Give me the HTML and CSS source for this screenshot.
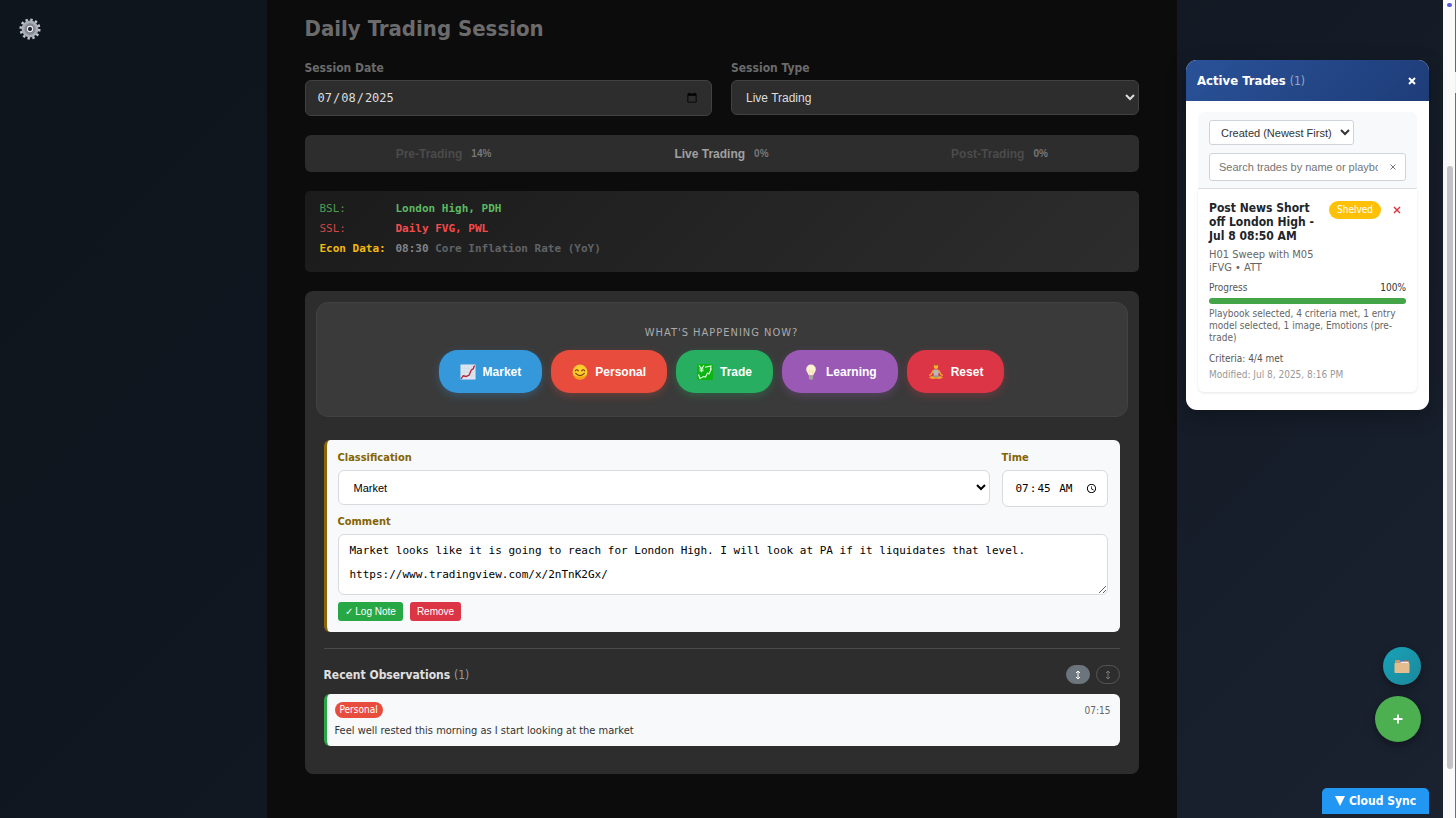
FILE: index.html
```html
<!DOCTYPE html>
<html lang="en">
<head>
<meta charset="utf-8">
<title>Daily Trading Session</title>
<link rel="stylesheet" href="styles.css">
</head>
<body>
<div class="app">
  <button class="settings" aria-label="Settings">
    <svg viewBox="0 0 24 24" width="22" height="22">
      <g fill="none" stroke="#a9adb5">
        <circle cx="12" cy="12" r="10" stroke-width="3" stroke-dasharray="2.6 2.636" stroke="#c3c6cd"/>
        <circle cx="12" cy="12" r="7.4" stroke-width="3.6"/>
        <circle cx="12" cy="12" r="5" stroke-width="2.4" stroke="#868a93"/>
        <circle cx="12" cy="12" r="2.9" stroke-width="1.6" stroke="#e6e8ec"/>
      </g>
      <circle cx="12" cy="12" r="1.9" fill="#23272f"/>
    </svg>
  </button>

  <main class="session">
    <h1 class="title">Daily Trading Session</h1>
    <div class="session-fields">
      <div class="field">
        <label for="date">Session Date</label>
        <input class="dark-control date" id="date" type="date" value="2025-07-08">
      </div>
      <div class="field">
        <label for="type">Session Type</label>
        <select class="dark-control type" id="type"><option>Live Trading</option></select>
      </div>
    </div>

    <nav class="tabs">
      <button class="tab">Pre-Trading <span class="pct">14%</span></button>
      <button class="tab active">Live Trading <span class="pct">0%</span></button>
      <button class="tab">Post-Trading <span class="pct">0%</span></button>
    </nav>

    <dl class="levels">
      <dt class="buy">BSL:</dt><dd class="buy">London High, PDH</dd>
      <dt class="sell">SSL:</dt><dd class="sell">Daily FVG, PWL</dd>
      <dt class="econ">Econ Data:</dt><dd><span class="clock">08:30</span> Core Inflation Rate (YoY)</dd>
    </dl>

    <section class="live">
      <div class="actions">
        <p class="prompt">What's happening now?</p>
        <div class="action-row">
          <button class="action market">
            <svg viewBox="0 0 16 16" width="16" height="16"><rect x=".5" y=".5" width="15" height="15" fill="#dfe6f1"/><path d="M.5 4.3h15M.5 8h15M.5 11.700h15M4.300.5v15M8 .5v15M11.700.5v15" stroke="#cbd6e6" stroke-width=".6"/><path d="M1 15l2.200-3.200 3 .7 3-1.400 2-5 2-1.300L14.500 1.500" fill="none" stroke="#b3242f" stroke-width="1.300"/></svg>Market</button>
          <button class="action personal">
            <svg viewBox="0 0 16 16" width="16" height="16"><circle cx="8" cy="8" r="7.400" fill="#ffcb2f"/><path d="M1 10.500a7.400 7.400 0 0 0 14 0Q8 15 1 10.500" fill="#f5a21b"/><path d="M3.300 6.900q1.500-2.400 3 0M9.700 6.900q1.500-2.400 3 0M3.700 9.300q4.300 4.600 8.600 0" fill="none" stroke="#74400d" stroke-width="1.100" stroke-linecap="round"/></svg>Personal</button>
          <button class="action trade">
            <svg viewBox="0 0 16 16" width="16" height="16"><rect width="16" height="16" rx="1.500" fill="#0cb512"/><path d="M2 1.500l2.500 3.200L7 1.500M4.500 4.700v3.600M2.500 5h4M2.500 6.800h4M1.500 10.500l1.500 4 3.500-2 2 .5 2-4 1.500 1 2.500-5.500M8 3.200l6-1.200-.6 4" fill="none" stroke="#eaffea" stroke-width="1.100"/></svg>Trade</button>
          <button class="action learning">
            <svg viewBox="0 0 16 16" width="16" height="16"><path d="M8 .5a4.800 4.800 0 0 0-4.800 4.900c0 2.200 1.800 3.400 2.600 6h4.400c.8-2.600 2.600-3.800 2.600-6A4.800 4.800 0 0 0 8 .5z" fill="#fff3cf"/><path d="M6.800 11l-.8-4.500 2 1 2-1-.8 4.500" fill="none" stroke="#f0d79c" stroke-width=".7"/><path d="M5.900 11.400h4.200v2.800L9 15.700H7l-1.100-1.500z" fill="#a7a49b"/></svg>Learning</button>
          <button class="action reset">
            <svg viewBox="0 0 16 16" width="16" height="16"><circle cx="8" cy="2.800" r="2.200" fill="#f4b42c"/><circle cx="8" cy=".9" r=".9" fill="#8a5a22"/><path d="M6 5.500h4l1.200 3.500-1 .5.200 2.500H5.600l.2-2.500-1-.5z" fill="#b5b8bb"/><path d="M5.500 6L3 10.500l-1.800 1M10.500 6L13 10.500l1.800 1" fill="none" stroke="#f4b42c" stroke-width="1.300"/><path d="M1 13.500q3-2.500 7-.7 4-1.800 7 .7-2 2.200-7 1-5 1.200-7-1z" fill="#e9a52c"/><path d="M4 12.600l4 .6 4-.6-4-1.400z" fill="#8d9599"/></svg>Reset</button>
        </div>
      </div>

      <div class="live-body">
        <form class="note" onsubmit="return false">
          <div class="note-row">
            <div class="field wide">
              <label for="class">Classification</label>
              <select class="class-select" id="class"><option>Market</option></select>
            </div>
            <div class="field">
              <label for="time">Time</label>
              <input class="time" id="time" type="time" value="07:45">
            </div>
          </div>
          <div class="field comment-field">
            <label for="comment">Comment</label>
            <textarea id="comment" spellcheck="false">Market looks like it is going to reach for London High. I will look at PA if it liquidates that level.

https://www.tradingview.com/x/2nTnK2Gx/</textarea>
          </div>
          <div class="note-buttons">
            <button class="log">✓ Log Note</button>
            <button class="remove">Remove</button>
          </div>
        </form>

        <div class="recent">
          <div class="recent-head">
            <h2>Recent Observations <span class="count">(1)</span></h2>
            <div class="sorts">
              <button class="sort on" aria-label="Expand"><svg viewBox="0 0 6 10" width="6" height="10"><path d="M3 1v8M1 3l2-2 2 2M1 7l2 2 2-2" fill="none" stroke="currentColor"/></svg></button>
              <button class="sort" aria-label="Collapse"><svg viewBox="0 0 6 10" width="6" height="10"><path d="M3 1v8M1 3l2-2 2 2M1 7l2 2 2-2" fill="none" stroke="currentColor"/></svg></button>
            </div>
          </div>
          <article class="observation">
            <div class="obs-top"><span class="badge">Personal</span><time>07:15</time></div>
            <p>Feel well rested this morning as I start looking at the market</p>
          </article>
        </div>
      </div>
    </section>
  </main>

  <aside class="trades">
    <header class="trades-head">
      <h2>Active Trades <span class="count">(1)</span></h2>
      <button class="close" aria-label="Close"><svg viewBox="0 0 8 8" width="8" height="8"><path d="M1 1l6 6M7 1L1 7" stroke="currentColor" stroke-width="2"/></svg></button>
    </header>
    <div class="trades-body">
      <div class="filters">
        <select class="order" aria-label="Sort order"><option>Created (Newest First)</option></select>
        <div class="search">
          <input type="text" aria-label="Search trades" placeholder="Search trades by name or playbook">
          <button class="clear" aria-label="Clear search"><svg viewBox="0 0 6 6" width="6" height="6"><path d="M.5.5l5 5M5.500.5l-5 5" stroke="currentColor"/></svg></button>
        </div>
      </div>
      <article class="trade-card">
        <div class="trade-top">
          <div class="trade-name">
            <h3>Post News Short off London High - Jul 8 08:50 AM</h3>
            <p class="playbook">H01 Sweep with M05 iFVG • ATT</p>
          </div>
          <span class="shelved">Shelved</span>
          <button class="delete" aria-label="Delete trade"><svg viewBox="0 0 8 8" width="8" height="8"><path d="M1 1l6 6M7 1L1 7" stroke="currentColor" stroke-width="1.500"/></svg></button>
        </div>
        <div class="progress-row"><span>Progress</span><span class="progress-value">100%</span></div>
        <div class="bar"><div class="fill" style="width:100%"></div></div>
        <p class="summary">Playbook selected, 4 criteria met, 1 entry model selected, 1 image, Emotions (pre-trade)</p>
        <p class="criteria">Criteria: 4/4 met</p>
        <p class="modified">Modified: Jul 8, 2025, 8:16 PM</p>
      </article>
    </div>
  </aside>

  <div class="floating">
    <button class="fab files" aria-label="Files">
      <svg viewBox="0 0 16 16" width="16" height="16"><path d="M1 3q0-1 1-1h4l1 1.500h8v4H1z" fill="#c89b68"/><path d="M6 2.500h3v2H6z" fill="#5b6bc0"/><path d="M9.500 2.500h5v1.200h-5z" fill="#d9534f"/><path d="M6.500 3.700h8v2h-8z" fill="#f1f1f4"/><rect x=".5" y="5" width="15" height="10" rx=".8" fill="#e3bd8d"/></svg>
    </button>
    <button class="fab add" aria-label="Add"><svg viewBox="0 0 10 10" width="10" height="10"><path d="M5 .5v9M.5 5h9" stroke="currentColor" stroke-width="1.800"/></svg></button>
  </div>
  <button class="sync"><svg viewBox="0 0 10 10" width="10" height="10"><path d="M0 0h10L5 10z" fill="currentColor"/></svg>Cloud Sync</button>
</div>
<div class="scroll-track"><span class="marker"></span><span class="thumb"></span></div>
<div class="edge"></div>
</body>
</html>
```
FILE: styles.css
```css
* { box-sizing: border-box; }
body {
  margin: 0;
  display: flex;
  min-height: 100vh;
  background: #fafafa;
  font-family: "DejaVu Sans Condensed", "Noto Sans", sans-serif;
  font-size: 11px;
  color: #333;
}
h1, h2, h3, p, dl, dd { margin: 0; }
button, select, input, textarea { font-family: "Liberation Sans", Arial, sans-serif; }
button { border: 0; padding: 0; background: none; display: flex; align-items: center; justify-content: center; }

.app {
  position: relative;
  flex: 1;
  min-height: 100vh;
  background: linear-gradient(135deg, #0e151d 0%, #0f161f 35%, #1a2230 100%);
}
.settings { position: absolute; left: 19px; top: 18px; }

.session {
  max-width: 910px;
  min-height: 100vh;
  margin: 0 auto;
  padding: 13px 38px 44px;
  background: #0c0c0c;
}
.title { font-size: 22px; line-height: 32px; color: #6b6b6b; }
.session-fields { display: grid; grid-template-columns: 1fr 1fr; gap: 19px; margin-top: 15px; align-items: start; }
.field { display: flex; flex-direction: column; }
.field label { font-weight: bold; }
.session-fields label { font-size: 12px; line-height: 16px; margin-bottom: 4px; color: #6b6b6b; }
.dark-control { border: 1px solid #414141; border-radius: 6px; background: #2d2d2d; color: #dedede; width: 100%; }
.date { height: 36px; padding: 0 11px; font: 12px "DejaVu Sans Mono", monospace; }
.type { height: 35px; padding: 0 10px; font-size: 12px; }

.tabs { display: grid; grid-template-columns: repeat(3, 1fr); margin-top: 19px; height: 37px; border-radius: 6px; background: #2d2d2d; }
.tab { gap: 9px; font-size: 12px; font-weight: bold; color: #4b4b4b; }
.tab.active { color: #a0a0a0; }
.pct { font-size: 10px; color: #777; }

.levels {
  display: grid;
  grid-template-columns: 76px 1fr;
  grid-auto-rows: 20px;
  margin-top: 19px;
  padding: 8px 15px 13px;
  border-radius: 5px;
  background: linear-gradient(135deg, #1b1b1b, #2d2d2d);
  font: 11px/20px "DejaVu Sans Mono", monospace;
}
.levels dd { font-weight: bold; color: #606366; }
.levels .buy { color: #5cb860; }
.levels .sell { color: #f44b4b; }
.levels dt.buy { color: #4c9c50; }
.levels dt.sell { color: #cf4747; }
.levels .econ { color: #f2b90f; font-weight: bold; }
.clock { color: #818488; }

.live { margin-top: 19px; padding: 11px 11px 28px; border-radius: 8px; background: #2d2d2d; }
.actions { padding: 23px 12px 23px; border: 1px solid #424242; border-radius: 12px; background: #3a3a3a; }
.prompt { text-align: center; text-transform: uppercase; letter-spacing: 1px; font-size: 11px; line-height: 14px; color: #ababab; }
.action-row { display: flex; justify-content: center; gap: 9px; margin-top: 10px; }
.action { gap: 7px; height: 43px; padding: 0 21px; border-radius: 19px; font-size: 12px; font-weight: bold; color: #fff; }
.market { background: #3498db; box-shadow: 0 3px 8px rgba(52, 152, 219, .3); }
.personal { background: #e74c3c; box-shadow: 0 3px 8px rgba(231, 76, 60, .3); }
.trade { background: #27ae60; box-shadow: 0 3px 8px rgba(39, 174, 96, .3); }
.learning { background: #9b59b6; box-shadow: 0 3px 8px rgba(155, 89, 182, .3); }
.reset { background: #dc3545; box-shadow: 0 3px 8px rgba(220, 53, 69, .3); }

.live-body { padding: 23px 8px 0; }
.note { padding: 10px 12px 11px 11px; border-left: 3px solid #8b6508; border-radius: 6px; background: #f8f9fa; }
.note-row { display: flex; gap: 12px; align-items: flex-start; }
.note .wide { flex: 1; }
.note label { font-size: 11px; line-height: 15px; margin-bottom: 5px; color: #856404; }
.note select, .note input, .note textarea { border: 1px solid #d8dadd; border-radius: 6px; background: #fff; color: #000; }
.class-select { height: 35px; padding: 0 11px; font-size: 11px; }
.note .time { width: 106px; height: 37px; padding: 0 6px 0 12px; font: 11px "DejaVu Sans Mono", monospace; }
.comment-field { margin-top: 7px; }
.note textarea { height: 61px; padding: 10px 11px; font: 11px/12px "DejaVu Sans Mono", monospace; resize: vertical; overflow: hidden; }
.note-buttons { display: flex; gap: 7px; margin-top: 7px; }
.note-buttons button { height: 19px; padding: 0 7px; border-radius: 3px; font-size: 10px; color: #fff; }
.note-buttons .log { background: #28a745; }
.note-buttons .remove { background: #dc3545; }

.recent { margin-top: 16px; border-top: 1px solid #4a4a4a; padding-top: 16px; }
.recent-head { display: flex; align-items: center; justify-content: space-between; height: 19px; margin-bottom: 10px; }
.recent-head h2 { font-size: 12px; color: #e0e0e0; }
.count { font-weight: normal; font-size: 12px; color: #999; }
.sorts { display: flex; gap: 6px; }
.sort { width: 24px; height: 19px; border: 1px solid #555; border-radius: 10px; color: #777; }
.sort.on { border-color: #6c757d; background: #6c757d; color: #fff; }
.observation { padding: 8px 9px 8px 8px; border-left: 3px solid #28a745; border-radius: 6px; background: #f8f9fa; }
.obs-top { display: flex; align-items: center; justify-content: space-between; height: 16px; }
.badge { padding: 0 5px; border-radius: 8px; background: #e74c3c; color: #fff; font-size: 10px; line-height: 16px; }
.obs-top time { font-size: 10px; color: #666; }
.observation p { margin-top: 5px; font-size: 11px; line-height: 15px; }

.trades {
  position: absolute;
  right: 14px;
  top: 60px;
  width: 243px;
  border-radius: 11px;
  overflow: hidden;
  background: #fff;
  box-shadow: 0 6px 20px rgba(0, 0, 0, .25);
}
.trades-head { display: flex; align-items: center; justify-content: space-between; height: 41px; padding: 0 13px 0 11px; background: linear-gradient(135deg, #2a5298, #1e3c78); color: #fff; }
.trades-head h2 { font-size: 13px; }
.trades-head .count { color: #9aa9c5; }
.close { color: #fff; }
.trades-body { padding: 11px 12px 18px; }
.filters { display: flex; flex-direction: column; gap: 8px; padding: 8px 11px 7px; border-bottom: 1px solid #dee2e6; border-radius: 6px 6px 0 0; background: #f8f9fa; }
.order { align-self: flex-start; width: 145px; height: 25px; padding: 0 2px 0 7px; border: 1px solid #ced4da; border-radius: 3px; background: #fff; color: #333; font-size: 11px; }
.search { display: flex; align-items: center; height: 28px; padding: 0 9px; border: 1px solid #ced4da; border-radius: 3px; background: #fff; }
.search input { flex: 1; min-width: 0; border: 0; padding: 0; margin-right: 12px; outline: 0; background: transparent; font-size: 11px; }
.clear { color: #777; }
.trade-card { padding: 12px 11px 10px; border-radius: 0 0 6px 6px; box-shadow: 0 1px 3px rgba(0, 0, 0, .1); }
.trade-top { display: flex; align-items: flex-start; }
.trade-name { width: 112px; flex: none; }
.trade-top h3 { font-size: 12px; line-height: 14px; color: #212529; }
.playbook { margin-top: 5px; font-size: 11px; line-height: 13px; color: #666; }
.shelved { margin-left: 8px; padding: 0 8px; border-radius: 9px; background: #ffc107; color: #fff; font-size: 10px; line-height: 18px; }
.delete { margin-left: auto; margin-right: 5px; height: 18px; color: #dc3545; }
.progress-row { display: flex; justify-content: space-between; margin-top: 7px; font-size: 10px; line-height: 14px; color: #555; }
.progress-value { color: #333; }
.bar { height: 6px; margin-top: 3px; border-radius: 3px; background: #e9ecef; overflow: hidden; }
.fill { height: 100%; background: #43a547; }
.summary { margin-top: 4px; font-size: 10px; line-height: 12px; color: #666; }
.criteria { margin-top: 8px; font-size: 10px; line-height: 14px; color: #555; }
.modified { margin-top: 2px; font-size: 10px; line-height: 14px; color: #999; }

.floating { position: absolute; right: 22px; bottom: 76px; display: flex; flex-direction: column; align-items: flex-end; gap: 11px; }
.fab { border-radius: 50%; color: #fff; box-shadow: 0 3px 9px rgba(0, 0, 0, .35); }
.files { width: 38px; height: 38px; background: linear-gradient(135deg, #17a2b8, #1c889b); }
.add { width: 46px; height: 46px; background: #4caf50; }
.sync { position: absolute; right: 14px; bottom: 4px; gap: 4px; width: 107px; height: 26px; border-radius: 5px 5px 0 0; background: #2196f3; color: #fff; font: bold 12px "DejaVu Sans Condensed", "Noto Sans", sans-serif; }

.scroll-track { position: relative; width: 12px; }
.marker { position: absolute; left: 4px; top: 3px; width: 5px; height: 4px; border-radius: 2px; background: #5b5bdb; }
.thumb { position: absolute; left: 4px; top: 166px; width: 6px; height: 603px; border-radius: 3px; background: #c4c2c4; }
.edge { width: 1px; background: linear-gradient(#666 72px, #eee 72px 93px, #b05060 93px); }
```
